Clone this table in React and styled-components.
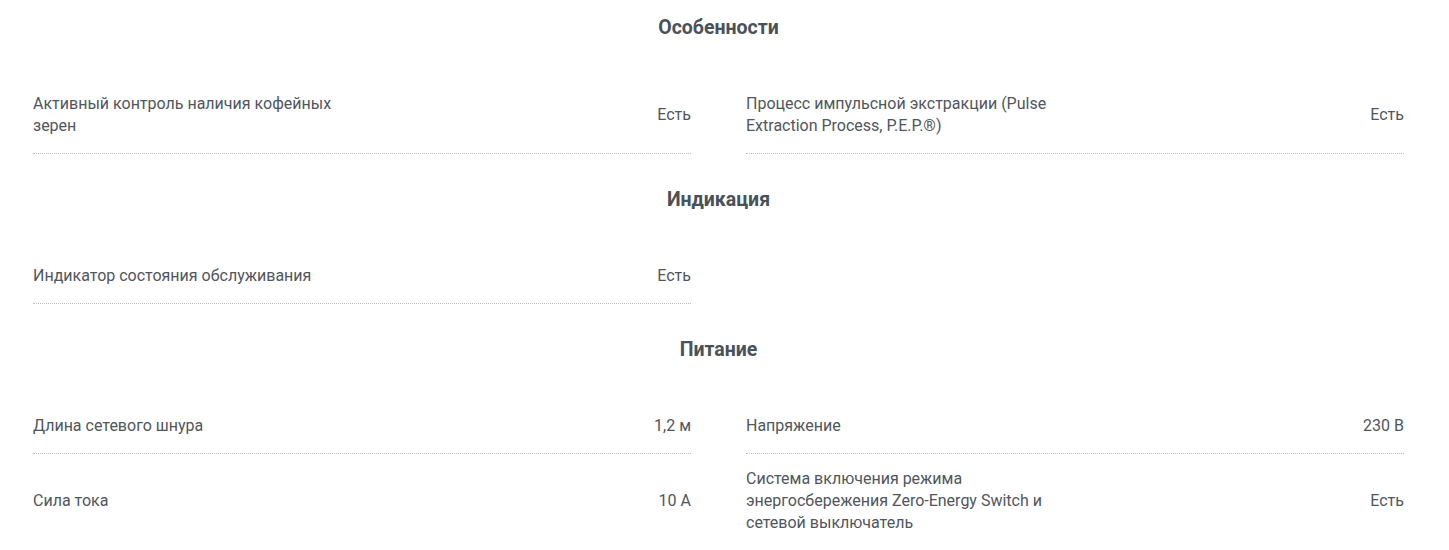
import styled, { createGlobalStyle } from "styled-components";

const GlobalStyle = createGlobalStyle`
  html, body {
    margin: 0;
    padding: 0;
    background: #ffffff;
  }
  body {
    font-family: Roboto, "Liberation Sans", Arial, sans-serif;
    -webkit-font-smoothing: antialiased;
  }
`;

const sections = [
  {
    title: "Особенности",
    rows: [
      ["Активный контроль наличия кофейных зерен", "Есть"],
      ["Процесс импульсной экстракции (Pulse Extraction Process, P.E.P.®)", "Есть"],
    ],
  },
  {
    title: "Индикация",
    rows: [["Индикатор состояния обслуживания", "Есть"]],
  },
  {
    title: "Питание",
    rows: [
      ["Длина сетевого шнура", "1,2 м"],
      ["Напряжение", "230 В"],
      ["Сила тока", "10 А"],
      [
        "Система включения режима энергосбережения Zero-Energy Switch и сетевой выключатель",
        "Есть",
      ],
    ],
  },
];

const Page = styled.div`
  padding: 16px 45px 0 33px;
`;

const Section = styled.section`
  & + & {
    margin-top: 34px;
  }
`;

const Title = styled.h3`
  margin: 0 0 39px;
  font-size: 19.5px;
  line-height: 24px;
  font-weight: 700;
  color: #4a5158;
  text-align: center;
`;

const Grid = styled.div`
  display: grid;
  grid-template-columns: 1fr 1fr;
  column-gap: 55px;
`;

const Row = styled.div`
  display: flex;
  align-items: center;
  justify-content: space-between;
  padding: 14px 0 16px;
  border-bottom: 1px dotted #bdbdbd;
`;

const Label = styled.div`
  max-width: 50%;
  font-size: 16px;
  line-height: 22px;
  color: #50565c;
`;

const Value = styled.div`
  font-size: 16px;
  line-height: 22px;
  color: #50565c;
  text-align: right;
`;

export default function App() {
  return (
    <Page>
      <GlobalStyle />
      {sections.map((section) => (
        <Section key={section.title}>
          <Title>{section.title}</Title>
          <Grid>
            {section.rows.map(([label, value]) => (
              <Row key={label}>
                <Label>{label}</Label>
                <Value>{value}</Value>
              </Row>
            ))}
          </Grid>
        </Section>
      ))}
    </Page>
  );
}
